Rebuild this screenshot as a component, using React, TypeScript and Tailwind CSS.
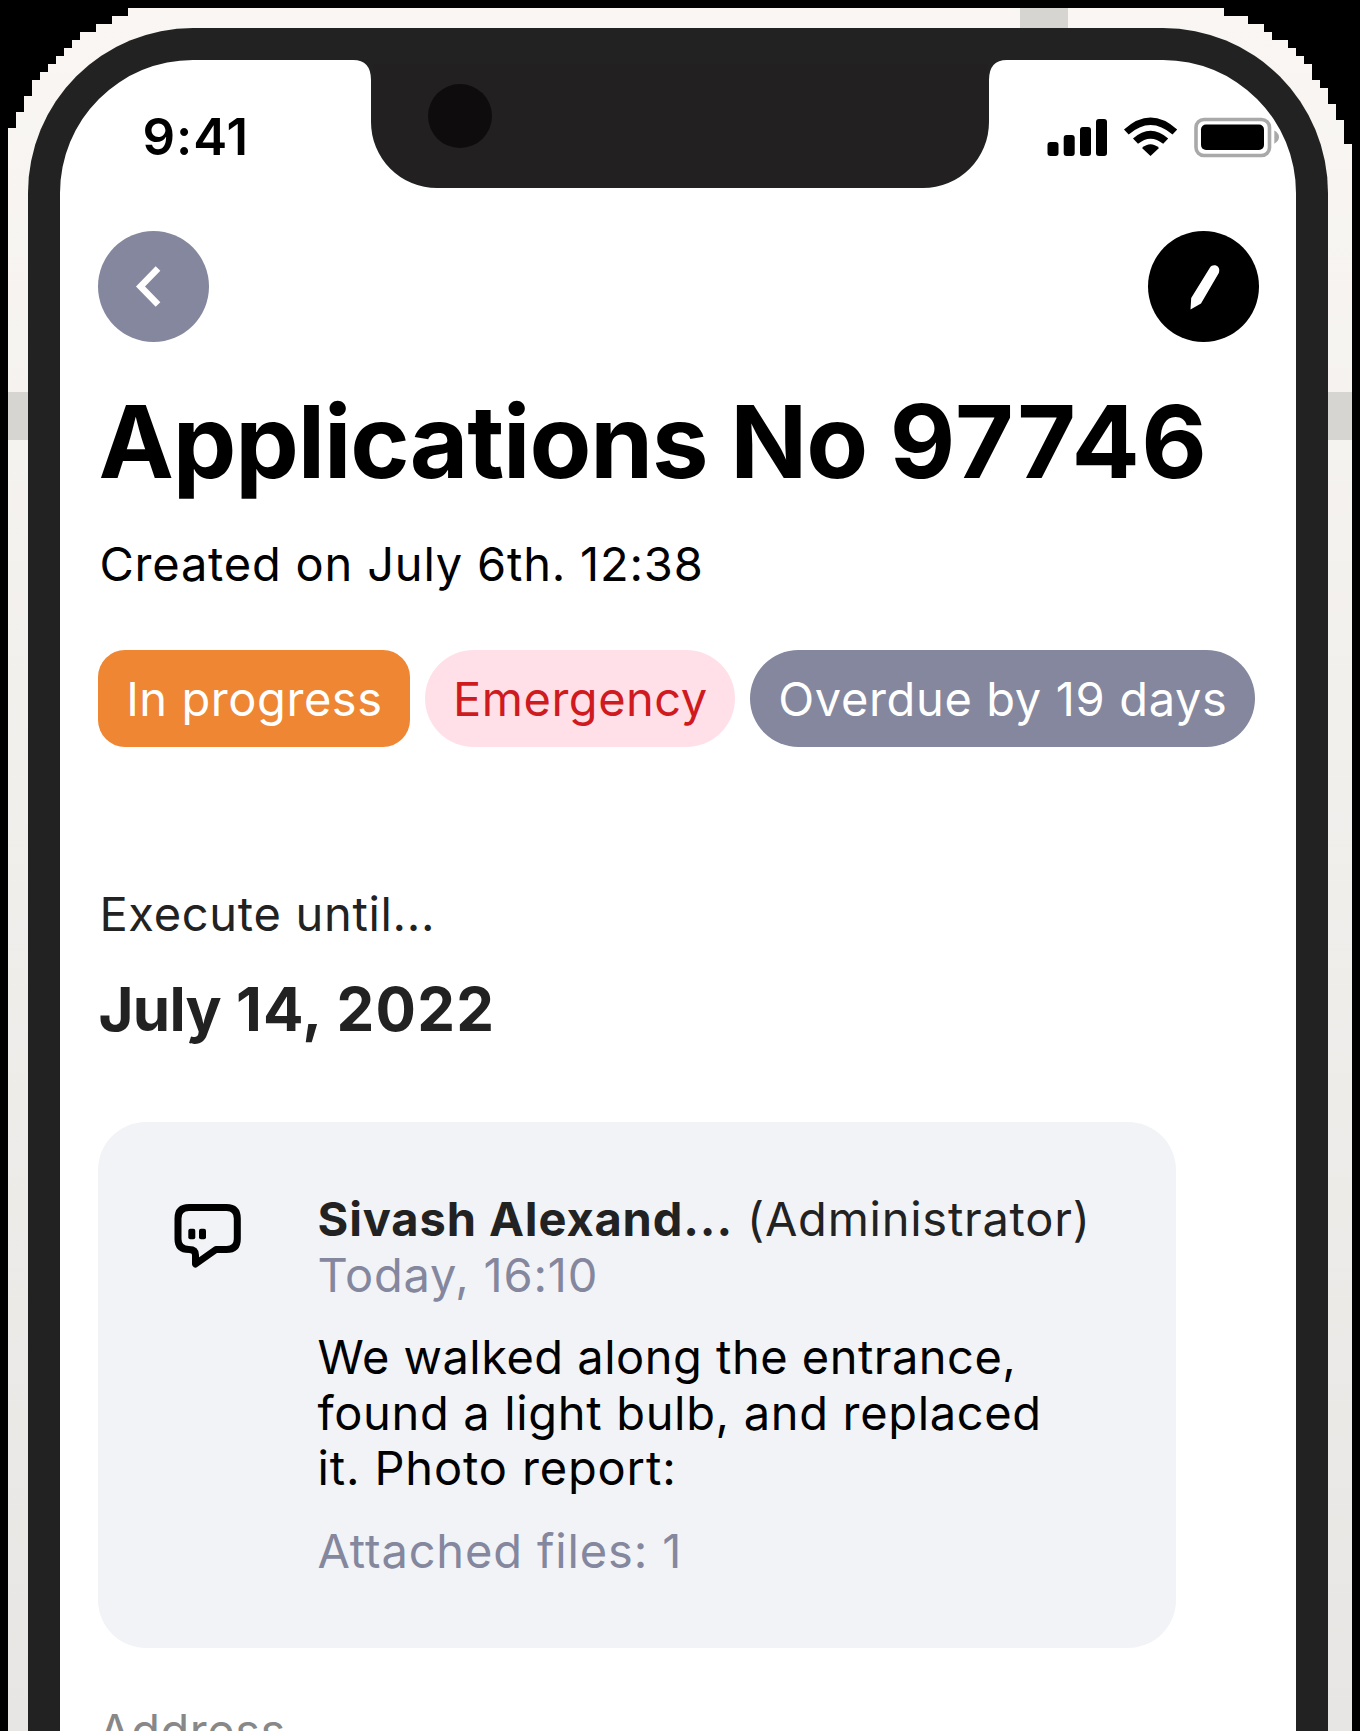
import React from "react";

const INK = "text-[#222222]";

function PhoneShell() {
  return (
    <svg className="absolute inset-0" width="1360" height="1731" viewBox="0 0 1360 1731">
      <defs>
        <linearGradient id="edge" x1="0" y1="0" x2="0" y2="1">
          <stop offset="0" stopColor="#f9f6f3" />
          <stop offset="0.4" stopColor="#f2f0ed" />
          <stop offset="1" stopColor="#e7e6e4" />
        </linearGradient>
      </defs>
      <path
        fill="url(#edge)"
        shapeRendering="crispEdges"
        d="M8 1731V128H16V112H24V96H32V80H40V72H48V64H56V56H64V48H72V40H80V32H96V24H112V16H128V8H1224V16H1248V24H1264V32H1272V40H1288V48H1296V56H1304V64H1312V80H1320V88H1328V104H1336V120H1344V144H1352V1731Z"
      />
      <path fill="#d7d5d2" shapeRendering="crispEdges" d="M1020 8h48v20h-48zM8 392h20v48H8zM1328 392h24v48h-24z" />
      <path fill="#222222" d="M28 1731V193A165 165 0 0 1 193 28H1163A165 165 0 0 1 1328 193V1731Z" />
      <path
        fill="#fff"
        d="M60 1731V193A133 133 0 0 1 193 60H353Q371 60 371 80V122A66 66 0 0 0 437 188H923A66 66 0 0 0 989 122V80Q989 60 1007 60H1163A133 133 0 0 1 1296 193V1731Z"
      />
      <path fill="#232021" d="M373 64H987V122A64 64 0 0 1 923 187H437A64 64 0 0 1 373 122Z" />
      <circle cx="460" cy="116" r="32" fill="#0f0c0d" />
    </svg>
  );
}

function Status() {
  return (
    <svg className="absolute left-[1040px] top-[110px]" width="250" height="56" viewBox="1040 110 250 56">
      <rect x="1047.5" y="142" width="11" height="14" rx="3" />
      <rect x="1063.7" y="135" width="11" height="21" rx="3" />
      <rect x="1080" y="127" width="11" height="29" rx="3" />
      <rect x="1096" y="119" width="11" height="37" rx="3" />
      <path d="M1124 129.500Q1150.500 105.500 1177.200 129.500L1172.500 134.500Q1150.500 115.500 1128.700 134.500Z" />
      <path d="M1133 138.500Q1150.500 123 1168.200 138.500L1163.200 143.800Q1150.500 133.500 1138 143.800Z" />
      <path d="M1142 148Q1150.500 140.500 1159 148L1150.500 156Z" />
      <rect x="1196" y="119.500" width="73.500" height="36" rx="8" fill="none" stroke="#a9a9a9" strokeWidth="3.600" />
      <rect x="1201" y="124.500" width="63" height="25.500" rx="5" />
      <path fill="#a9a9a9" d="M1274.300 130.500Q1279 133 1279 137T1274.300 143.800Z" />
    </svg>
  );
}

function Tag({ className, children }: { className: string; children: React.ReactNode }) {
  return (
    <span className={`flex h-[97px] items-center justify-center whitespace-nowrap pt-px text-[47px] ${className}`}>
      {children}
    </span>
  );
}

export default function App() {
  return (
    <div className="relative h-[1731px] w-[1360px] overflow-hidden bg-black font-['Inter',sans-serif] text-black">
      <PhoneShell />
      <Status />
      <div className="relative flex flex-col items-start pl-[98.4px]">
        <div className="ml-[44px] mt-[105px] h-[64px] text-[51px] font-semibold leading-[64px] tracking-[1px]">9:41</div>
        <div className="mt-[62px] flex w-[1161px] justify-between">
          <button className="size-[111px] rounded-full bg-[#84879d]">
            <svg width="111" height="111" viewBox="0 0 111 111" fill="none" stroke="#fff" strokeWidth="6.500">
              <path d="M60 37.500L42.500 55.500L60 73.500" />
            </svg>
          </button>
          <button className="size-[111px] rounded-full bg-black">
            <svg width="111" height="111" viewBox="0 0 111 111" fill="#fff">
              <path d="M62 36.500C64.500 32 73.500 34 70.800 42L53 72.500L42.500 78.500L43.200 67Z" />
            </svg>
          </button>
        </div>
        <h1 className="mt-[37.5px] h-[122px] whitespace-nowrap text-[101px] font-bold leading-[122px] tracking-[-1.1px]">
          Applications No <span className="tracking-[1.5px]">97746</span>
        </h1>
        <p className="ml-px mt-[33.5px] h-[58px] whitespace-nowrap text-[47px] leading-[58px] tracking-[0.8px]">
          Created on July 6th. 12:38
        </p>
        <div className="mt-[57px] flex gap-[15px]">
          <Tag className="w-[312px] rounded-[27px] bg-[#ee8633] tracking-[0.56px] text-white">In progress</Tag>
          <Tag className="w-[310px] rounded-full bg-[#ffe0e8] tracking-[0.5px] text-[#cf1a20]">Emergency</Tag>
          <Tag className="w-[505px] rounded-full bg-[#84879d] tracking-[0.65px] text-white">Overdue by 19 days</Tag>
        </div>
        <p className={`ml-px mt-[138px] h-[58px] text-[47px] leading-[58px] tracking-[0.7px] ${INK}`}>Execute until...</p>
        <p className={`mt-[30px] h-[72px] whitespace-nowrap text-[60px] font-bold leading-[72px] ${INK}`}>
          <span className="tracking-[-0.7px]">July</span>
          <span className="tracking-[0.9px]"> 14, </span>
          <span className="tracking-[1.2px]">2022</span>
        </p>
        <section className="mt-[77px] flex h-[526px] w-[1077.5px] rounded-[48px] bg-[#f1f3f7] pl-[75.6px] pt-[69px] text-[47px] leading-[55.5px] tracking-[0.8px]">
          <svg className="mt-[11px] shrink-0" width="70" height="70" viewBox="0 0 70 70">
            <path
              fill="none"
              stroke="#000"
              strokeWidth="7"
              strokeLinejoin="round"
              d="M15 5.500H52.500Q63.300 5.500 63.300 16.500V37Q63.300 47.500 52.500 47.500H42L21.500 62V53Q21.500 47.500 15 47.500Q4 47.500 4 37V16.500Q4 5.500 15 5.500Z"
            />
            <rect x="14.300" y="26.700" width="7" height="10.600" rx="2" />
            <rect x="25" y="26.700" width="7" height="10.600" rx="2" />
          </svg>
          <div className="ml-[73.500px] whitespace-nowrap">
            <div className={INK}>
              <b className="tracking-[0.88px]">Sivash Alexand...</b> <span className="tracking-[0.75px]">(Administrator)</span>
            </div>
            <div className="text-[#84879d]">Today, 16:10</div>
            <p className="mt-[27px]">
              <span className="tracking-[0.49px]">We walked along the entrance,</span>
              <br />
              <span className="tracking-[0.67px]">found a light bulb, and replaced</span>
              <br />
              <span className="tracking-[0.86px]">it. Photo report:</span>
            </p>
            <div className="mt-[27px] tracking-[0.86px] text-[#84879d]">Attached files: 1</div>
          </div>
        </section>
        <p className="mt-[54px] h-[58px] text-[47px] leading-[58px] tracking-[0.5px] text-[#888888]">Address</p>
      </div>
    </div>
  );
}
